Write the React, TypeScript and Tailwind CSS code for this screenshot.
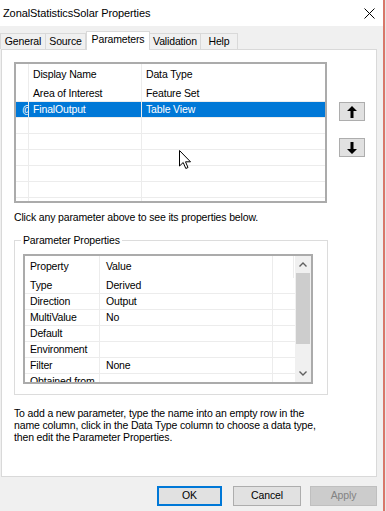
import React from "react";

const font = "font-['Liberation_Sans',Arial,sans-serif]";

const paramRows = [
  { name: "Area of Interest", type: "Feature Set" },
  { name: "FinalOutput", type: "Table View", selected: true },
  {}, {}, {}, {}, {}, {},
];

const propRows = [
  ["Type", "Derived"],
  ["Direction", "Output"],
  ["MultiValue", "No"],
  ["Default", ""],
  ["Environment", ""],
  ["Filter", "None"],
  ["Obtained from", ""],
];

function ArrowUp() {
  return (
    <svg width="10" height="12" viewBox="0 0 10 12">
      <path d="M5 0 L10 5 L6.5 5 L6.5 12 L3.5 12 L3.5 5 L0 5 Z" fill="#000" />
    </svg>
  );
}

function ArrowDown() {
  return (
    <svg width="10" height="12" viewBox="0 0 10 12">
      <path d="M5 12 L10 7 L6.5 7 L6.5 0 L3.5 0 L3.5 7 L0 7 Z" fill="#000" />
    </svg>
  );
}

function Cursor() {
  return (
    <svg width="13" height="20" viewBox="0 0 13 20" className="absolute left-[163px] top-[86px]">
      <path
        d="M0.5 0.5 L0.5 16 L4.2 12.5 L6.8 18.5 L9 17.5 L6.5 11.8 L11.5 11.8 Z"
        fill="#fff"
        stroke="#000"
        strokeWidth="1"
        strokeLinejoin="round"
      />
    </svg>
  );
}

function ParamsGrid() {
  return (
    <div className="relative h-[141px] w-[313px] overflow-hidden border-2 border-[#ababab] bg-white">
      <div className="flex h-[22px] items-center">
        <div className="h-full w-[13px] border-r border-[#ececec]" />
        <div className="flex h-full w-[113px] items-center border-r border-[#ececec] pl-[4px]">Display Name</div>
        <div className="flex h-full flex-1 items-center pl-[4px]">Data Type</div>
      </div>
      {paramRows.map((r, i) => (
        <div
          key={i}
          className={
            "flex h-[16px] items-center border-b border-[#ececec] " +
            (r.selected ? "bg-[#0078d7] text-white" : "")
          }
        >
          <div className="flex h-full w-[13px] items-center overflow-hidden border-r border-[#ececec] pl-[6px] text-[10px]">
            {r.selected ? "@" : ""}
          </div>
          <div className="flex h-full w-[113px] items-center border-r border-[#ececec] pl-[4px]">{r.name}</div>
          <div className="flex h-full flex-1 items-center pl-[4px]">{r.type}</div>
        </div>
      ))}
      <Cursor />
    </div>
  );
}

function PropsGrid() {
  return (
    <div className="flex h-[130px] w-[290px] overflow-hidden border-2 border-[#ababab] bg-white">
      <div className="flex flex-1 flex-col">
        <div className="flex h-[22px] shrink-0 items-center">
          <div className="flex h-full w-[74px] items-center pl-[5px]">Property</div>
          <div className="flex h-full w-[173px] items-center border-l border-[#ececec] pl-[6px]">Value</div>
          <div className="h-full flex-1 border-l border-[#ececec]" />
          <div className="h-full w-[2px] border-l border-[#ececec]" />
        </div>
        {propRows.map(([k, v], i) => (
          <div key={i} className="flex h-[16px] shrink-0 items-center border-b border-[#ececec]">
            <div className="flex h-full w-[74px] items-center whitespace-nowrap pl-[5px]">{k}</div>
            <div className="flex h-full w-[173px] items-center border-l border-[#ececec] pl-[6px]">{v}</div>
            <div className="h-full flex-1 border-l border-[#ececec]" />
          </div>
        ))}
      </div>
      <div className="flex w-[16px] flex-col bg-[#f0f0f0]">
        <div className="flex h-[17px] items-center justify-center">
          <svg width="8" height="5" viewBox="0 0 8 5">
            <path d="M0.5 4.5 L4 1 L7.5 4.5" fill="none" stroke="#606060" strokeWidth="1.4" />
          </svg>
        </div>
        <div className="mx-[1px] h-[71px] bg-[#cdcdcd]" />
        <div className="flex-1" />
        <div className="flex h-[17px] items-center justify-center">
          <svg width="8" height="5" viewBox="0 0 8 5">
            <path d="M0.5 0.5 L4 4 L7.5 0.5" fill="none" stroke="#606060" strokeWidth="1.4" />
          </svg>
        </div>
      </div>
    </div>
  );
}

export default function App() {
  const tabs = ["General", "Source", "Parameters", "Validation", "Help"];
  const tabW = [46, 41, 64, 52, 38];
  return (
    <div className={"flex h-[511px] w-[386px] text-[10.5px] tracking-[-0.15px] text-black " + font}>
      <div className="flex h-full w-[383px] flex-col bg-[#f0f0f0]">
        <div className="flex h-[26px] shrink-0 items-center justify-between bg-white pl-[3px] pr-[8px]">
          <span className="text-[11px] tracking-[-0.1px]">ZonalStatisticsSolar Properties</span>
          <svg width="11" height="11" viewBox="0 0 11 11">
            <path d="M0.5 0.5 L10.5 10.5 M10.5 0.5 L0.5 10.5" stroke="#000" strokeWidth="1" />
          </svg>
        </div>
        <div className="mt-[5px] flex h-[18px] shrink-0 items-end pl-[1px]">
          {tabs.map((t, i) => {
            const sel = t === "Parameters";
            return (
              <div
                key={t}
                style={{ width: tabW[i] }}
                className={
                  "flex items-center justify-center whitespace-nowrap border border-b-0 border-[#d9d9d9] " +
                  (sel ? "relative z-10 -mb-[1px] h-[19px] bg-white pb-[3px]" : "-ml-[1px] h-[16px] bg-[#f0f0f0]")
                }
              >
                {t}
              </div>
            );
          })}
        </div>
        <div className="ml-[1px] flex h-[428px] w-[376px] shrink-0 flex-col border border-[#d9d9d9] bg-white pl-[12px]">
          <div className="mt-[12px] flex">
            <ParamsGrid />
            <div className="ml-[12px] flex flex-col pt-[40px]">
              <div className="flex h-[19px] w-[26px] items-center justify-center border border-[#adadad] bg-[#e1e1e1]">
                <ArrowUp />
              </div>
              <div className="mt-[17px] flex h-[19px] w-[26px] items-center justify-center border border-[#adadad] bg-[#e1e1e1]">
                <ArrowDown />
              </div>
            </div>
          </div>
          <div className="mt-[8px] leading-[13px]">Click any parameter above to see its properties below.</div>
          <div className="relative mt-[16px] h-[155px] w-[314px] border border-[#dcdcdc] pl-[8px] pt-[13px]">
            <span className="absolute -top-[7px] left-[6px] bg-white px-[2px] leading-[13px]">Parameter Properties</span>
            <PropsGrid />
          </div>
          <div className="mt-[12px] leading-[12px]">
            To add a new parameter, type the name into an empty row in the
            <br />
            name column, click in the Data Type column to choose a data type,
            <br />
            then edit the Parameter Properties.
          </div>
        </div>
        <div className="mt-[9px] flex justify-end pr-[6px]">
          <div className="flex h-[20px] w-[65px] items-center justify-center border-2 border-[#0078d7] bg-[#e1e1e1]">OK</div>
          <div className="ml-[11px] flex h-[20px] w-[68px] items-center justify-center border border-[#adadad] bg-[#e1e1e1]">Cancel</div>
          <div className="ml-[9px] flex h-[20px] w-[67px] items-center justify-center border border-[#bfbfbf] bg-[#cccccc] text-[#838383]">Apply</div>
        </div>
      </div>
      <div className="h-full w-[2px] bg-[#d9776a]" />
      <div className="h-full flex-1 bg-[#e6e6e6]" />
    </div>
  );
}
